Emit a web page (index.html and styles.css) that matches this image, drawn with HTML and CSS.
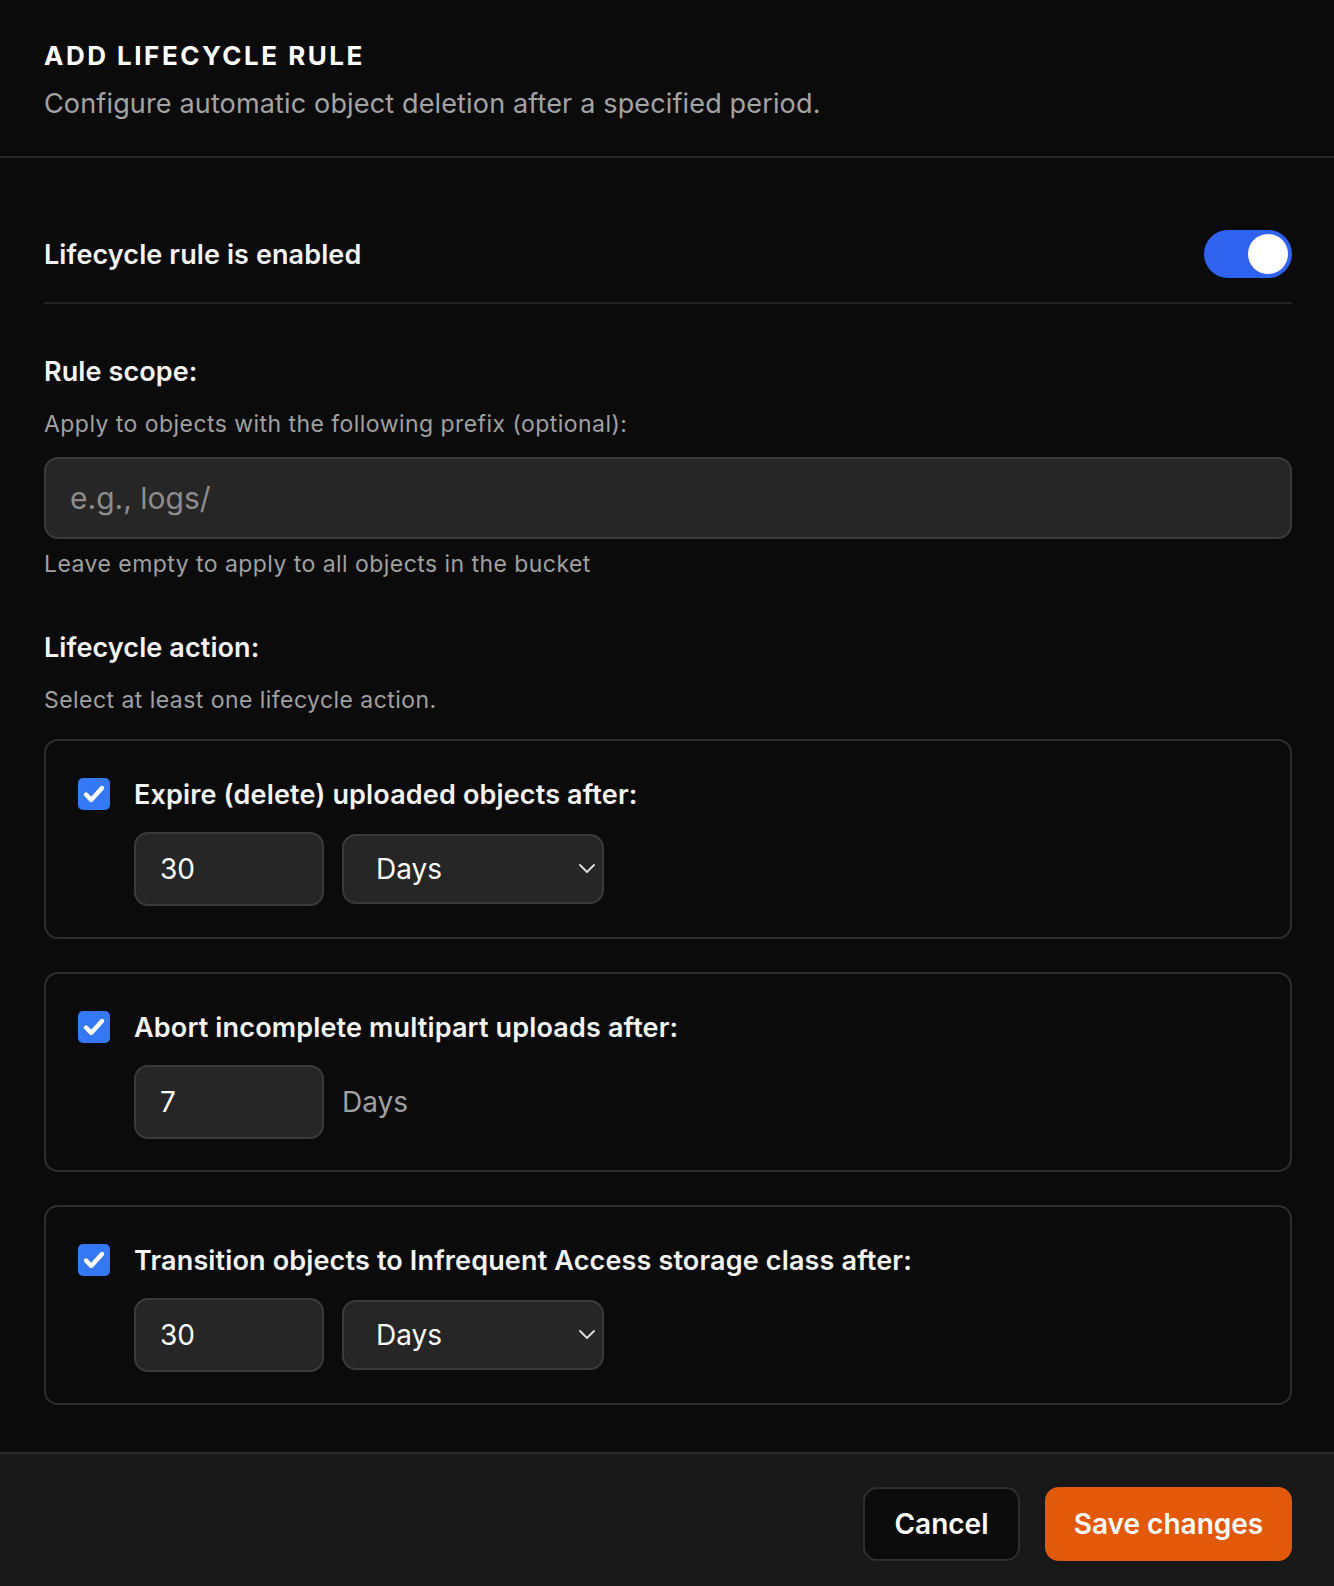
FILE: index.html
```html
<!DOCTYPE html>
<html lang="en">
<head>
  <meta charset="UTF-8" />
  <title>Add lifecycle rule</title>
  <link rel="stylesheet" href="styles.css">
</head>
<body>
  <div class="dialog">
    <header class="dialog-header">
      <h1>ADD LIFECYCLE RULE</h1>
      <p>Configure automatic object deletion after a specified period.</p>
    </header>

    <div class="dialog-body">
      <div class="toggle-row">
        <span class="toggle-label">Lifecycle rule is enabled</span>
        <span class="toggle on"><span class="knob"></span></span>
      </div>

      <h2 class="section-title">Rule scope:</h2>
      <p class="hint">Apply to objects with the following prefix (optional):</p>
      <input class="prefix-input" type="text" placeholder="e.g., logs/" />
      <p class="hint hint-below">Leave empty to apply to all objects in the bucket</p>

      <h2 class="section-title">Lifecycle action:</h2>
      <p class="hint">Select at least one lifecycle action.</p>

      <div class="action-card">
        <div class="action-head">
          <span class="check"><svg viewBox="0 0 32 32" width="32" height="32"><path d="M8 16.5l5.2 5.5L24 10" fill="none" stroke="#fff" stroke-width="4.4" stroke-linecap="round" stroke-linejoin="round"/></svg></span>
          <span class="action-label">Expire (delete) uploaded objects after:</span>
        </div>
        <div class="action-fields">
          <input class="num-input" type="text" value="30" />
          <div class="select-wrap">
            <select><option>Days</option></select>
            <svg class="chevron" viewBox="0 0 16 9" width="16" height="9"><path d="M1 1l7 7 7-7" fill="none" stroke="#e0e0e0" stroke-width="1.8" stroke-linecap="round" stroke-linejoin="round"/></svg>
          </div>
        </div>
      </div>

      <div class="action-card">
        <div class="action-head">
          <span class="check"><svg viewBox="0 0 32 32" width="32" height="32"><path d="M8 16.5l5.2 5.5L24 10" fill="none" stroke="#fff" stroke-width="4.4" stroke-linecap="round" stroke-linejoin="round"/></svg></span>
          <span class="action-label">Abort incomplete multipart uploads after:</span>
        </div>
        <div class="action-fields">
          <input class="num-input" type="text" value="7" />
          <span class="unit">Days</span>
        </div>
      </div>

      <div class="action-card">
        <div class="action-head">
          <span class="check"><svg viewBox="0 0 32 32" width="32" height="32"><path d="M8 16.5l5.2 5.5L24 10" fill="none" stroke="#fff" stroke-width="4.4" stroke-linecap="round" stroke-linejoin="round"/></svg></span>
          <span class="action-label">Transition objects to Infrequent Access storage class after:</span>
        </div>
        <div class="action-fields">
          <input class="num-input" type="text" value="30" />
          <div class="select-wrap">
            <select><option>Days</option></select>
            <svg class="chevron" viewBox="0 0 16 9" width="16" height="9"><path d="M1 1l7 7 7-7" fill="none" stroke="#e0e0e0" stroke-width="1.8" stroke-linecap="round" stroke-linejoin="round"/></svg>
          </div>
        </div>
      </div>
    </div>

    <footer class="dialog-footer">
      <button class="btn btn-cancel">Cancel</button>
      <button class="btn btn-save">Save changes</button>
    </footer>
  </div>
</body>
</html>
```

FILE: styles.css
```css
body {
  margin: 0;
  background: #0b0b0b;
  color: #f4f4f4;
  font-family: Inter, "Noto Sans", sans-serif;
}

.dialog {
  width: 1334px;
  min-height: 1586px;
  display: flex;
  flex-direction: column;
}

.dialog-header {
  padding: 38px 42px 34px 44px;
  border-bottom: 2px solid #262626;
}

.dialog-header h1 {
  margin: 0;
  font-size: 26px;
  line-height: 36px;
  font-weight: 700;
  letter-spacing: 2.5px;
  color: #fff;
}

.dialog-header p {
  margin: 12px 0 0;
  font-size: 27px;
  line-height: 36px;
  letter-spacing: 0.15px;
  color: #a3a3a3;
}

.dialog-body {
  padding: 72px 42px 44px 44px;
  flex: 1;
}

.toggle-row {
  display: flex;
  justify-content: space-between;
  align-items: center;
  padding-bottom: 24px;
  border-bottom: 2px solid #232323;
}

.toggle-label {
  font-size: 27px;
  font-weight: 600;
  letter-spacing: 0.1px;
}

.toggle {
  width: 88px;
  height: 48px;
  border-radius: 24px;
  background: #2f62ef;
  display: flex;
  align-items: center;
  justify-content: flex-end;
  padding: 0 4px;
  box-sizing: border-box;
}

.knob {
  width: 40px;
  height: 40px;
  border-radius: 50%;
  background: #fff;
}

.section-title {
  margin: 52px 0 0;
  font-size: 27px;
  line-height: 32px;
  font-weight: 600;
  letter-spacing: 0.1px;
}

.section-title + .hint {
  margin-top: 22px;
}

.hint {
  margin: 22px 0 0;
  font-size: 23px;
  line-height: 28px;
  letter-spacing: 0.45px;
  color: #a0a0a0;
}

.hint-below {
  margin-top: 11px;
}

.hint-below + .section-title {
  margin-top: 54px;
}

.prefix-input {
  display: block;
  width: 100%;
  height: 82px;
  margin-top: 19px;
  box-sizing: border-box;
  padding: 0 24px;
  background: #262626;
  border: 2px solid #3a3a3a;
  border-radius: 14px;
  font-family: inherit;
  font-size: 30px;
  color: #f4f4f4;
  outline: none;
}

.prefix-input::placeholder {
  color: #8c8c8c;
}

.action-card {
  margin-top: 33px;
  border: 2px solid #2e2e2e;
  border-radius: 14px;
  padding: 37px 32px 31px;
}

.hint + .action-card {
  margin-top: 25px;
}

.action-head {
  display: flex;
  align-items: center;
  gap: 24px;
  height: 32px;
}

.check {
  width: 32px;
  height: 32px;
  border-radius: 5px;
  background: #3478f6;
  display: flex;
}

.action-label {
  font-size: 27px;
  font-weight: 600;
  letter-spacing: 0.15px;
}

.action-fields {
  display: flex;
  align-items: center;
  gap: 18px;
  margin: 22px 0 0 56px;
}

.num-input {
  width: 190px;
  height: 74px;
  box-sizing: border-box;
  padding: 0 24px;
  background: #262626;
  border: 2px solid #3a3a3a;
  border-radius: 14px;
  font-family: inherit;
  font-size: 28px;
  color: #fff;
  outline: none;
}

.select-wrap {
  position: relative;
  width: 262px;
  height: 70px;
}

.select-wrap select {
  appearance: none;
  -webkit-appearance: none;
  width: 100%;
  height: 100%;
  padding: 0 32px;
  background: #262626;
  border: 2px solid #3a3a3a;
  border-radius: 14px;
  font-family: inherit;
  font-size: 28px;
  color: #fff;
  outline: none;
}

.chevron {
  position: absolute;
  right: 9px;
  top: 30px;
}

.unit {
  font-size: 28px;
  color: #a0a0a0;
}

.dialog-footer {
  display: flex;
  justify-content: flex-end;
  gap: 25px;
  padding: 33px 42px 25px;
  background: #181818;
  border-top: 2px solid #2a2a2a;
}

.btn {
  height: 74px;
  border-radius: 14px;
  font-family: inherit;
  font-size: 28px;
  font-weight: 600;
  color: #fff;
  cursor: pointer;
}

.btn-cancel {
  width: 157px;
  background: #0b0b0b;
  border: 2px solid #2e2e2e;
}

.btn-save {
  width: 247px;
  background: #e2590a;
  border: none;
}
```
